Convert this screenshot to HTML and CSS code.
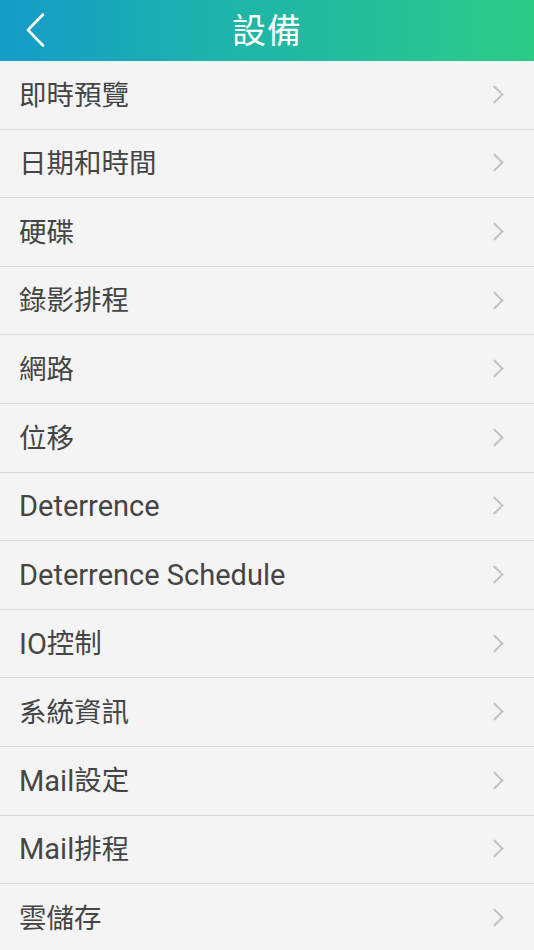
FILE: index.html
```html
<!DOCTYPE html>
<html lang="zh-Hant">
<head>
    <meta charset="UTF-8">
    <title>設備</title>
    <meta name="viewport" content="width=device-width, initial-scale=1.0">
    <link rel="stylesheet" href="styles.css">
</head>
<body>
    <header class="topbar">
        <span class="back">
            <svg width="20" height="34" viewBox="0 0 20 34"><path d="M18 1.5 L3 17 L18 32.5" fill="none" stroke="#fff" stroke-width="2.6" stroke-linecap="round" stroke-linejoin="round"/></svg>
        </span>
        <h1>設備</h1>
    </header>
    <ul class="menu">
        <li>即時預覽</li>
        <li>日期和時間</li>
        <li>硬碟</li>
        <li>錄影排程</li>
        <li>網路</li>
        <li>位移</li>
        <li><span class="lat">Deterrence</span></li>
        <li><span class="lat">Deterrence Schedule</span></li>
        <li><span class="lat">IO</span>控制</li>
        <li>系統資訊</li>
        <li><span class="lat">Mail</span>設定</li>
        <li><span class="lat">Mail</span>排程</li>
        <li>雲儲存</li>
    </ul>
</body>
</html>
```

FILE: styles.css
```css
:root {
    --text: #454545;
    --line: #d9d9d9;
    --bg: #f4f4f4;
    --arrow: #c2c2c2;
}
* {
    box-sizing: border-box;
    padding: 0;
    margin: 0;
}
body {
    background: var(--bg);
    font-family: Roboto, "Noto Sans CJK TC", sans-serif;
    overflow: hidden;
}

/* Top bar */
.topbar {
    position: relative;
    height: 61px;
    display: flex;
    align-items: center;
    justify-content: center;
    background: linear-gradient(90deg, #159cc9 0%, #1fb5a8 45%, #2dcb88 100%);
}
.topbar h1 {
    color: #fff;
    font-size: 34px;
    font-weight: 400;
    letter-spacing: 1px;
    line-height: 1;
}
.topbar .back {
    position: absolute;
    left: 25px;
    top: 13px;
    display: flex;
}

/* Menu list */
.menu {
    list-style: none;
}
.menu li {
    height: 68.6px;
    display: flex;
    align-items: center;
    padding: 1px 19px 0;
    font-size: 27.5px;
    line-height: 1;
    color: var(--text);
    border-bottom: 1.6px solid var(--line);
    position: relative;
}
.menu li .lat {
    font-size: 29px;
}
.menu li::after {
    content: "";
    position: absolute;
    right: 33px;
    top: 50%;
    width: 11px;
    height: 11px;
    margin-top: -7px;
    border-top: 2px solid var(--arrow);
    border-right: 2px solid var(--arrow);
    transform: rotate(45deg);
}
```
